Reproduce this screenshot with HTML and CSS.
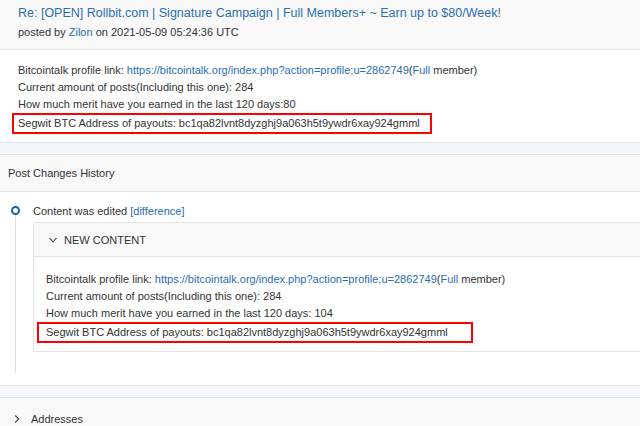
FILE: index.html
```html
<!DOCTYPE html>
<html lang="en">
<head>
  <meta charset="UTF-8" />
  <title>Post - Rollbit Signature Campaign</title>
  <link rel="stylesheet" href="styles.css">
</head>
<body>

  <div class="card post">
    <div class="card-header">
      <a class="post-title" href="#">Re: [OPEN] Rollbit.com | Signature Campaign | Full Members+ ~ Earn up to $80/Week!</a>
      <div class="post-meta">posted by <a href="#">Zilon</a> on 2021-05-09 05:24:36 UTC</div>
    </div>
    <div class="card-body">
      <div class="line">Bitcointalk profile link: <a href="#">https://bitcointalk.org/index.php?action=profile;u=2862749</a>(<a href="#">Full</a> member)</div>
      <div class="line">Current amount of posts(Including this one): 284</div>
      <div class="line">How much merit have you earned in the last 120 days:80</div>
      <div class="line"><span class="mark mark-first">Segwit BTC Address of payouts: bc1qa82lvnt8dyzghj9a063h5t9ywdr6xay924gmml</span></div>
    </div>
  </div>

  <div class="card history">
    <div class="card-header plain">Post Changes History</div>
    <div class="card-body timeline">
      <div class="event">
        <span class="dot"></span>
        <div class="event-title">Content was edited <a href="#">[difference]</a></div>
        <div class="inner-card">
          <div class="inner-header">
            <svg class="chev" width="10" height="10" viewBox="0 0 10 10"><path d="M1.5 3.2 L5 6.8 L8.5 3.2" fill="none" stroke="#444" stroke-width="1.1"/></svg>
            NEW CONTENT
          </div>
          <div class="inner-body">
            <div class="line">Bitcointalk profile link: <a href="#">https://bitcointalk.org/index.php?action=profile;u=2862749</a>(<a href="#">Full</a> member)</div>
            <div class="line">Current amount of posts(Including this one): 284</div>
            <div class="line">How much merit have you earned in the last 120 days: 104</div>
            <div class="line"><span class="mark mark-second">Segwit BTC Address of payouts: bc1qa82lvnt8dyzghj9a063h5t9ywdr6xay924gmml</span></div>
          </div>
        </div>
      </div>
    </div>
  </div>

  <div class="card addresses">
    <div class="card-header plain">
      <svg class="chev" width="10" height="10" viewBox="0 0 10 10"><path d="M3.2 1.5 L6.8 5 L3.2 8.5" fill="none" stroke="#444" stroke-width="1.1"/></svg>
      Addresses
    </div>
  </div>

</body>
</html>
```

FILE: styles.css
```css
* {
  box-sizing: border-box;
}

body {
  margin: 0;
  background: #f4f8fd;
  font-family: 'Liberation Sans', Arial, sans-serif;
  font-size: 11px;
  color: #333;
}

a {
  color: #2a6db0;
  text-decoration: none;
}

.card {
  background: #fff;
  border-bottom: 1px solid #e3e3e3;
}

.card + .card {
  margin-top: 11px;
  border-top: 1px solid #e3e3e3;
}

.card-header {
  background: #f9f9f9;
  border-bottom: 1px solid #e3e3e3;
  padding: 4px 18px 0;
  height: 50px;
}

.post-title {
  display: block;
  font-size: 12.5px;
  line-height: 18px;
  color: #2a6db0;
}

.post-meta {
  margin-top: 2px;
  line-height: 16px;
}

.card-body {
  padding: 12px 18px 8px;
}

.line {
  line-height: 17px;
}

.mark {
  display: inline-block;
  border: 2px solid #f00;
  line-height: 17px;
}

.mark-first {
  margin-left: -6px;
  padding: 0 10px 0 4px;
}

.mark-second {
  margin-left: -9px;
  padding: 0 23px 0 7px;
}

.history .card-header {
  display: flex;
  align-items: center;
  height: 37px;
  padding: 0 8px;
}

.timeline {
  padding: 11px 0 12px 15px;
}

.event {
  position: relative;
  border-left: 1px solid #ddd;
  padding: 0 0 21px 17px;
}

.dot {
  position: absolute;
  left: -5px;
  top: 3px;
  width: 9px;
  height: 9px;
  border: 2px solid #1f5f9e;
  border-radius: 50%;
  background: #fff;
}

.event-title {
  line-height: 16px;
}

.inner-card {
  margin-top: 3px;
  border: 1px solid #e3e3e3;
  border-right: none;
  border-radius: 3px 0 0 3px;
  background: #fff;
}

.inner-header {
  display: flex;
  align-items: center;
  gap: 6px;
  height: 34px;
  padding-left: 14px;
  background: #f9f9f9;
  border-bottom: 1px solid #e3e3e3;
}

.inner-body {
  padding: 14px 12px 8px;
}

.addresses .card-header {
  display: flex;
  align-items: center;
  gap: 9px;
  height: 42px;
  padding: 0 0 0 12px;
  border-bottom: none;
}
```
